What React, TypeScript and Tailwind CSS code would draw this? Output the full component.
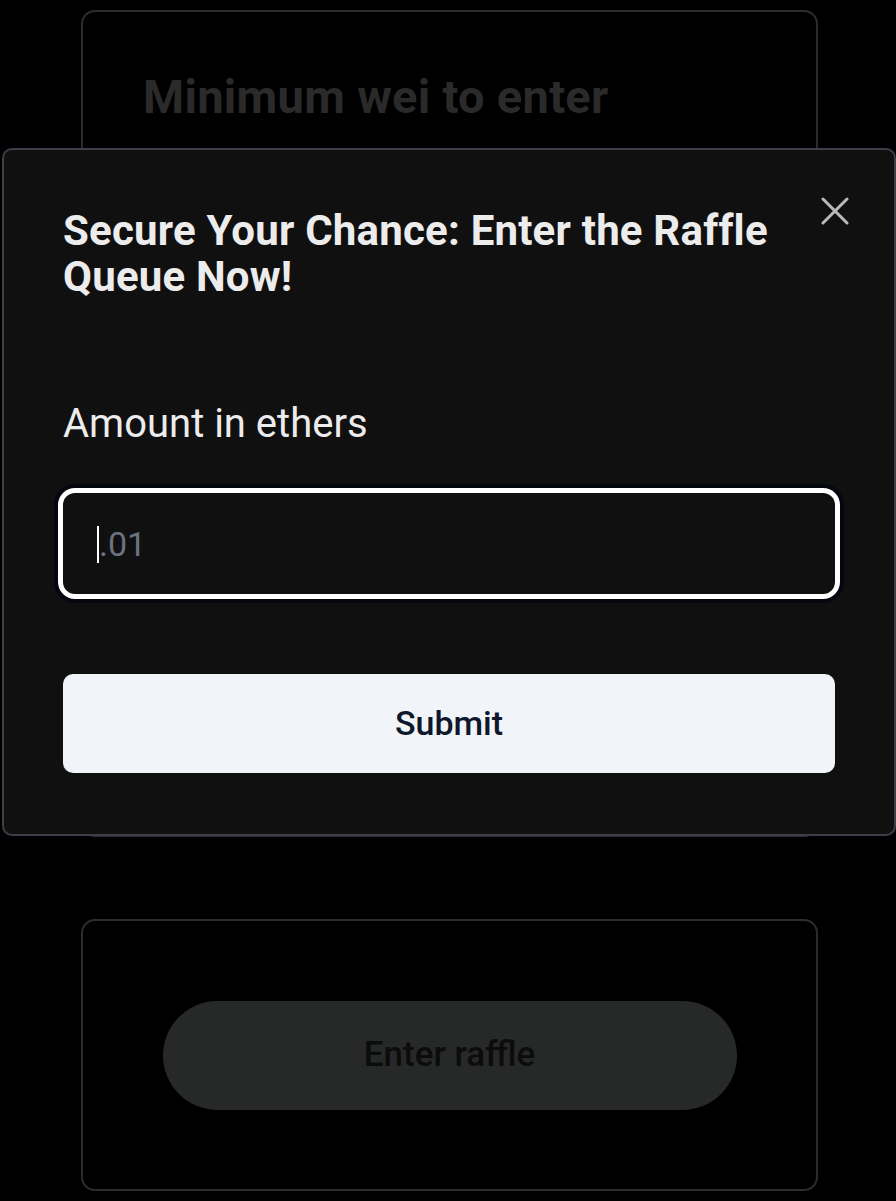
import type { FC } from "react";

const CloseIcon: FC = () => (
  <svg width="28" height="28" viewBox="0 0 28 28" fill="none" stroke="currentColor" strokeWidth="3" strokeLinecap="round">
    <path d="M2 2 26 26" />
    <path d="M26 2 2 26" />
  </svg>
);

const App: FC = () => {
  return (
    <div className="relative min-h-[1201px] overflow-hidden bg-black font-['Roboto','Liberation_Sans',sans-serif]">
      {/* page behind the dialog */}
      <div className="ml-[81px] flex w-[737px] flex-col gap-[82px] pt-[10px]">
        <div className="h-[827px] rounded-[14px] border-2 border-[#2c2c2c] pl-[60px] pt-[55px]">
          <h2 className="text-[47px] leading-[60px] font-bold tracking-[0.3px] text-[#2a2a2a]">
            Minimum wei to enter
          </h2>
        </div>
        <div className="flex h-[272px] items-center justify-center rounded-[14px] border-2 border-[#2c2c2c]">
          <button className="flex h-[109px] w-[574px] items-center justify-center rounded-full bg-[#272828] text-[35px] font-medium text-[#0c0c0c]">
            Enter raffle
          </button>
        </div>
      </div>

      {/* dialog */}
      <div className="absolute left-[2px] top-[148px] flex h-[688px] w-[894px] flex-col rounded-[10px] border-2 border-[#3a3f48] bg-[#111011] px-[59px] pt-[58px]">
        <button className="absolute right-[45px] top-[47px] text-[#b9b9b9]">
          <CloseIcon />
        </button>
        <h1 className="pr-[60px] text-[42px] leading-[46px] font-bold tracking-[0.2px] text-[#ececec]">
          Secure Your Chance: Enter the Raffle Queue Now!
        </h1>
        <label className="mt-[100px] text-[40px] leading-[48px] text-[#ececec]">Amount in ethers</label>
        <div className="relative mt-[45px]">
          <input
            placeholder=".01"
            className="h-[101px] w-full rounded-[12px] bg-[#111011] px-[36px] text-[34px] text-white outline-none ring-[5px] ring-white shadow-[0_0_0_9px_#05070f] placeholder:text-[#6b7280]"
          />
          <span className="absolute left-[34px] top-[33px] h-[37px] w-[2px] bg-white" />
        </div>
        <button className="mt-[80px] h-[99px] w-full rounded-[10px] bg-[#f1f5f9] text-[34px] font-medium text-[#0f172a]">
          Submit
        </button>
      </div>
    </div>
  );
};

export default App;
